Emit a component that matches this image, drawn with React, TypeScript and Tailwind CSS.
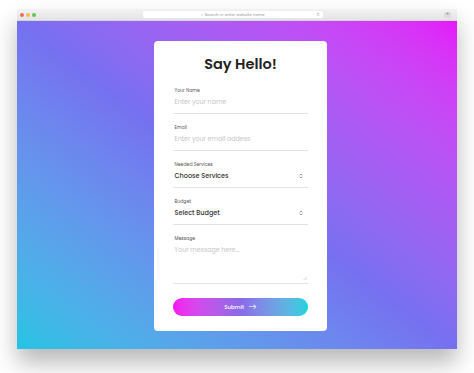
import React from "react";

const Arrows = () => (
  <svg width="4" height="6" viewBox="0 0 4 6" className="text-[#666]">
    <path d="M0.8 2.3 L2 1 L3.2 2.3" fill="none" stroke="currentColor" strokeWidth="0.7" />
    <path d="M0.8 3.7 L2 5 L3.2 3.7" fill="none" stroke="currentColor" strokeWidth="0.7" />
  </svg>
);

const Field = ({ label, children }: { label: string; children: React.ReactNode }) => (
  <div className="flex flex-col">
    <label className="text-[4.6px] leading-[6px] text-[#555] h-[6px] pl-[1.5px]">{label}</label>
    {children}
  </div>
);

const App = () => {
  return (
    <div
      className="w-[474px] h-[373px] bg-white overflow-hidden pt-[9px] pl-[17px]"
      style={{ fontFamily: "Poppins, Inter, 'Noto Sans', sans-serif" }}
    >
      <div className="w-[440px] h-[340px] flex flex-col shadow-[0_14px_22px_rgba(0,0,0,0.28)]">
        {/* title bar */}
        <div className="h-[12px] bg-linear-to-b from-[#f2f2f2] to-[#e4e4e4] border-b border-[#d6d6d6] flex items-center px-[3px]">
          <div className="flex gap-[2px]">
            <span className="w-[4px] h-[4px] rounded-full bg-[#ee6a5f]" />
            <span className="w-[4px] h-[4px] rounded-full bg-[#f5bd4f]" />
            <span className="w-[4px] h-[4px] rounded-full bg-[#61c454]" />
          </div>
          <div className="ml-[107px] w-[180px] h-[7px] bg-white rounded-[2px] flex items-center justify-center relative">
            <span className="text-[4px] leading-[5px] text-[#999]">⌕ Search or enter website name</span>
            <span className="absolute right-[3px] text-[4px] leading-[5px] text-[#999]">↻</span>
          </div>
          <div className="ml-auto mr-[3px] w-[7px] h-[6px] bg-[#dcdcdc] rounded-[1px] text-[5px] leading-[6px] text-center text-[#888]">+</div>
        </div>
        {/* page */}
        <div className="flex-1 bg-linear-to-tr from-[#22c4e4] via-[#7670f0] to-[#e418f8] flex pl-[137px] pt-[20px]">
          <div className="w-[173px] h-[290px] bg-white rounded-[4px] px-[19px] pt-[13px] flex flex-col">
            <h1 className="text-[14.5px] leading-[20px] font-semibold text-[#222] text-center">
              Say Hello!
            </h1>
            <div className="mt-[14px] flex flex-col gap-[11px]">
              <Field label="Your Name">
                <div className="mt-[3px] pl-[1.5px] text-[6.3px] leading-[10px] text-[#c6c6c6] pb-[6px] border-b border-[#e2e2e2]">
                  Enter your name
                </div>
              </Field>
              <Field label="Email">
                <div className="mt-[3px] pl-[1.5px] text-[6.3px] leading-[10px] text-[#c6c6c6] pb-[6px] border-b border-[#e2e2e2]">
                  Enter your email addess
                </div>
              </Field>
              <Field label="Needed Services">
                <div className="mt-[3px] pl-[1.5px] text-[6.5px] leading-[10px] font-medium text-[#333] pb-[6px] border-b border-[#e2e2e2] flex items-center justify-between pr-[5px]">
                  Choose Services
                  <Arrows />
                </div>
              </Field>
              <Field label="Budget">
                <div className="mt-[3px] pl-[1.5px] text-[6.5px] leading-[10px] font-medium text-[#333] pb-[6px] border-b border-[#e2e2e2] flex items-center justify-between pr-[5px]">
                  Select Budget
                  <Arrows />
                </div>
              </Field>
              <Field label="Message">
                <div className="mt-[3px] pl-[1.5px] h-[39px] text-[6.3px] leading-[10px] text-[#c6c6c6] border-b border-[#e2e2e2] relative">
                  Your message here...
                  <svg width="4" height="4" viewBox="0 0 4 4" className="absolute right-[1px] bottom-[3px]">
                    <path d="M0.5 4 L4 0.5 M2.2 4 L4 2.2" stroke="#bbb" strokeWidth="0.5" />
                  </svg>
                </div>
              </Field>
            </div>
            <button className="mt-[14px] h-[18px] w-full rounded-full bg-linear-to-r from-[#f80ff0] via-[#8a6ae6] to-[#12d2de] text-white text-[5.5px] font-medium flex items-center justify-center gap-[4px]">
              Submit <span className="text-[6.5px]">⟶</span>
            </button>
          </div>
        </div>
      </div>
    </div>
  );
};

export default App;
